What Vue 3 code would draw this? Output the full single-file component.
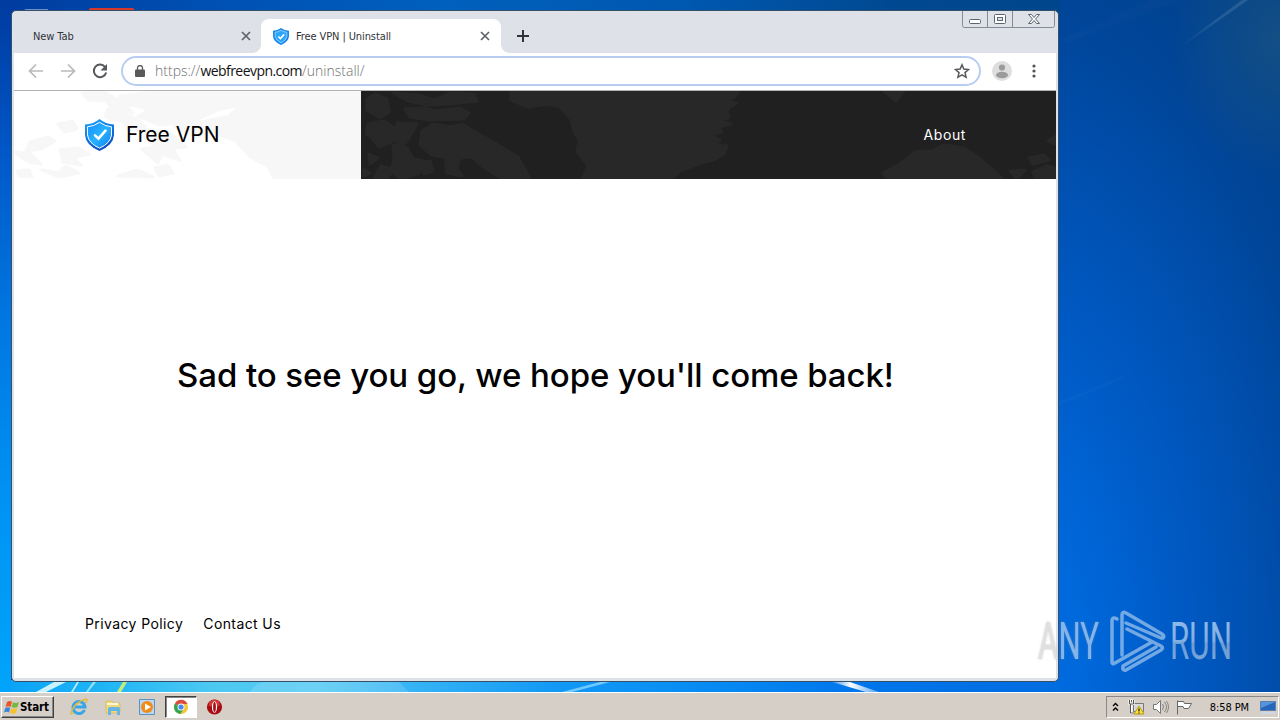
<script setup>
import { ref } from 'vue'

const tabs = ref([
  { id: 1, title: 'New Tab', active: false },
  { id: 2, title: 'Free VPN | Uninstall', active: true },
])

const footerLinks = ['Privacy Policy', 'Contact Us']
</script>

<template>
  <div class="desktop">
    <svg class="wallpaper" viewBox="0 0 1280 720">
      <defs>
        <linearGradient id="streak" x1="0" x2="1">
          <stop offset="0" stop-color="#fff" stop-opacity="0" />
          <stop offset="0.5" stop-color="#fff" stop-opacity="0.1" />
          <stop offset="1" stop-color="#fff" stop-opacity="0.12" />
        </linearGradient>
        <linearGradient id="flare" x1="0" x2="1">
          <stop offset="0" stop-color="#fff" stop-opacity="0.2" />
          <stop offset="0.4" stop-color="#fff" />
          <stop offset="1" stop-color="#fff" stop-opacity="0.3" />
        </linearGradient>
      </defs>
      <path d="M1180 46 1242 0 1248 0 1184 45z" fill="url(#streak)" />
      <path d="M1060 40 1150 0 1180 0 1070 42z" fill="#fff" opacity="0.015" />
      <path d="M1058 402 1125 375 1125 378 1058 406z" fill="#fff" opacity="0.02" />
      <path d="M24 10h24v-1H26z" fill="#b9c6dd" opacity="0.6" />
      <path d="M89 10v-1q0-1 2-1h41q2 0 2 1v1z" fill="#d8382c" />
      <path d="M36 692 54 682h12l-20 10z" fill="#c9f2ff" />
      <path d="M71 692 77 682h2l-6 10z" fill="#bdf0f5" />
      <path d="M86 692 93 682h3l-8 10z" fill="#9be3fb" />
      <path d="M117 692 123 682h4l-6 10z" fill="#c8ec7a" />
      <path d="M250 692q4-8 14-10h135l10 10z" fill="#fff" opacity="0.14" />
      <path d="M562 692 600 682h10l-38 10z" fill="#9be0ff" opacity="0.7" />
      <path d="M832 682h18l29 10h-13z" fill="url(#flare)" />
    </svg>

    <main class="window">
      <header class="tabstrip">
        <div v-for="tab in tabs" :key="tab.id" class="tab" :class="{ active: tab.active }">
          <svg v-if="tab.active" class="favicon" viewBox="0 0 30 32">
            <path d="M15 0Q21 5 30 5V16Q29 26 15 32Q1 26 0 16V5Q9 5 15 0z" fill="#1686e6" />
            <path d="M15 4Q21 8 26 8V16Q25 23 15 28Q5 23 4 16V8Q9 8 15 4z" fill="#2aa5fa" stroke="#a9dcff" stroke-width="1.500" />
            <path d="m10 16 4 4 7-8" fill="none" stroke="#fff" stroke-width="3" />
          </svg>
          <span class="tab-title">{{ tab.title }}</span>
          <svg class="tab-close" viewBox="0 0 10 10">
            <path d="m1 1 8 8M9 1 1 9" />
          </svg>
        </div>
        <svg class="new-tab" viewBox="0 0 12 12">
          <path d="M6 0v12M0 6h12" />
        </svg>
        <div class="controls">
          <svg viewBox="0 0 93 18">
            <path class="frame" d="M.5 0V14.500q0 2 2 2H90.500q2 0 2-2V0M25.500 0V16.500M50.500 0V16.500" />
            <rect x="7.500" y="8.500" width="11" height="4" rx="1" fill="#fff" />
            <rect x="32.500" y="3.500" width="11" height="9" rx="1" fill="#fff" />
            <rect x="35.500" y="6.500" width="5" height="3" fill="#dee1e8" />
            <path d="M66.500 3.500h3l2.500 3 2.500-3h3L73.500 8l4 4.500h-3L72 9.500l-2.500 3h-3L70.500 8z" fill="#fff" />
          </svg>
        </div>
      </header>

      <div class="toolbar">
        <svg class="nav muted" viewBox="0 0 16 16">
          <path d="M15 8H2M8 1.500 1.500 8 8 14.500" />
        </svg>
        <svg class="nav muted" viewBox="0 0 16 16">
          <path d="M1 8h13M8 1.500 14.500 8 8 14.500" />
        </svg>
        <svg class="nav" viewBox="0 0 16 16">
          <path d="M13.300 4.200A6.300 6.300 0 1 0 14.200 9.500" />
          <path class="solid" d="M15 1v6.500H8.500z" />
        </svg>
        <div class="omnibox">
          <svg class="lock" viewBox="0 0 10 12">
            <path d="M1 4.500h8q1 0 1 1V11q0 1-1 1H1q-1 0-1-1V5.500q0-1 1-1z" fill="#5a5a5a" />
            <path d="M2.500 5V3a2.500 2.500 0 0 1 5 0v2" fill="none" stroke="#5a5a5a" stroke-width="1.300" />
          </svg>
          <span class="url">https://<b>webfreevpn.com</b>/uninstall/</span>
          <svg class="star" viewBox="0 0 14 14">
            <path d="m7 1.500 1.600 3.800 4.200.4-3.200 2.700 1 4.100L7 10.300l-3.600 2.200 1-4.100L1.200 5.700l4.200-.4z" />
          </svg>
        </div>
        <svg class="avatar" viewBox="0 0 20 20">
          <circle cx="10" cy="10" r="10" fill="#dedede" />
          <circle cx="10" cy="6.500" r="3.100" fill="#9b9b9b" />
          <ellipse cx="10" cy="14" rx="6" ry="3.200" fill="#9b9b9b" />
        </svg>
        <svg class="menu" viewBox="0 0 4 14">
          <circle cx="2" cy="2" r="1.600" />
          <circle cx="2" cy="7" r="1.600" />
          <circle cx="2" cy="12" r="1.600" />
        </svg>
      </div>

      <section class="page">
        <div class="site-header">
          <svg class="map" viewBox="14 91 1042 88">
            <g class="light">
              <path d="M120 96 160 91H361V179H274L268 166 250 157 236 141 213 132 196 137 174 126 202 122 229 116 242 105 220 109 192 122 160 125 138 116 150 110 134 105 119 106z" />
              <path d="M82 93l22-1 14 8 15 13-20-4-7-8-17-1zM108 109l30 10 12 14-22-4-5-7-18-5zM150 130l22 5 14 12-14 1 8 12-18-6-4 9-16-14 14-2-12-10zM58 124l15-3 4 8-12 3zM30 142l18-5 7 4-14 8-15 2zM15 152l16 2 10 10-12-2-8-5zM60 150l18-2 11 6-16 4 8 7-18-3zM42 170l16 3 8-7 13 7-20 4zM17 171l12-1 3 7-13-1zM118 176l20-6 15 7zM155 168l12-3 6 8-14 3z" />
            </g>
            <path d="M361 91H1056V179H361z" fill="#202020" />
            <g class="dark">
              <path d="M511 91H739L734 97 727 102 737 103 727 109 729 117 719 121 731 124 718 127 722 132 708 135 720 140 714 144 727 146 724 154 713 160 698 164 680 171 672 179H582L588 166 582 158 577 152 579 140 574 132 571 119 560 107 547 104 528 107 511 100z" />
              <path d="M367 99l8-5 12 5 2 13-9 6-13-8zM393 93l26 2 15 5 17-7 23 1 3 7-25 3-26 1-18-4zM405 109l20-1 10 3 25-3 9 5-5 6-36 1-18-3zM368 124l16-3 9 6-2 15-12 5-8-10-5-3zM397 123l20 1-8 14-7 9-9-8zM422 131l11-7 18 3 11-3 20 12 20 11 16 10 12 22H502L482 166l-10-9-20 2-20-4-12-10z" />
              <path d="M393 145l14 3 6 11 11 2-5 12-18 6-10-8 3-11zM369 154l9 4-8 6zM381 166l13 4-8 9-12-1zM419 163l11-2 3 10-9 3zM445 157l14 2-2 10 5 7-15-3zM364 169l6 4-6 3z" />
              <path d="M884 91h20l-8 10z" />
              <path d="M883 173l17-9 15-12 17-1 12-6 20 3 15 10 14 12 10 9H887zM1010 171l15-1-8 9zM1029 158l15-3 5 5-16 4zM1033 172l14-6 9 2v11l-21-2zM1048 141l8-5v8z" />
            </g>
          </svg>
          <div class="brand">
            <svg viewBox="0 0 30 32">
              <defs>
                <linearGradient id="shield" x2="0.4" y2="1">
                  <stop offset="0" stop-color="#18a8ff" />
                  <stop offset="1" stop-color="#0b51c4" />
                </linearGradient>
                <linearGradient id="inner" x1="0" x2="1" y2="1">
                  <stop offset="0" stop-color="#148cff" />
                  <stop offset="0.5" stop-color="#27b3ff" />
                  <stop offset="1" stop-color="#147df0" />
                </linearGradient>
              </defs>
              <path d="M15 0Q21 5 29.500 5.500V16Q29 26 15 32Q1 26 .5 16V5.500Q9 5 15 0z" fill="url(#shield)" />
              <path d="M15 3.300Q20.500 7.300 27 7.800V16Q26 24.300 15 29.200Q4 24.300 3 16V7.800Q9.500 7.300 15 3.300z" fill="url(#inner)" stroke="#fff" />
              <path d="m10.500 16.300 3.500 3.300 7-8" fill="none" stroke="#fff" stroke-width="2.500" stroke-linecap="round" />
            </svg>
            <span>Free VPN</span>
          </div>
          <span class="about">About</span>
        </div>
        <h1><span>Sad to see you go, we hope you'll come back!</span></h1>
        <footer>
          <span v-for="link in footerLinks" :key="link">{{ link }}</span>
        </footer>
      </section>
    </main>

    <div class="taskbar">
      <div class="start">
        <svg viewBox="0 0 16 16">
          <path d="M3 3Q6 1 8 3L6.500 8Q4 6.500 1.500 8z" fill="#e8562a" />
          <path d="M9 3.300Q12 5 15 3L13.500 8Q10.500 9.500 7.500 8z" fill="#74b943" />
          <path d="M1.200 9Q4 7.500 6.200 9L5 13.500Q2.500 12 0 13.500z" fill="#3b86dc" />
          <path d="M7.200 9.200Q10 10.500 13.200 9L12 14Q9 15.500 5.800 14z" fill="#f5c229" />
        </svg>
        <span>Start</span>
      </div>
      <div class="launch">
        <svg viewBox="0 0 18 18">
          <path d="M14.500 12A6 6 0 1 1 15 9H5" fill="none" stroke="#3aa5e5" stroke-width="3" />
          <path d="M3 15Q0 18 1.500 13Q5 4 16 1Q18.500 1 15.500 5" fill="none" stroke="#e5b935" stroke-width="1.300" />
        </svg>
      </div>
      <div class="launch">
        <svg viewBox="0 0 18 18">
          <path d="M2 3h6l1 2h7v10H2z" fill="#f1d67b" stroke="#d5b252" stroke-width=".6" />
          <path d="M3 5h11v2H3z" fill="#fff8d5" />
          <path d="M4 17v-6q0-2 2-2h8q2 0 2 2v6h-3v-4H7v4z" fill="#65b6e3" />
        </svg>
      </div>
      <div class="launch">
        <svg viewBox="0 0 18 18">
          <path d="M1.500 1.500h15v15h-15z" fill="#b9d8f3" stroke="#5b91c7" />
          <circle cx="9" cy="9" r="6" fill="#f28a18" />
          <path d="m7 5.500 6 3.500-6 3.500z" fill="#fff" />
        </svg>
      </div>
      <div class="launch open">
        <svg viewBox="0 0 18 18">
          <circle cx="9" cy="9" r="7" fill="#f4c536" />
          <path d="M9 9 3 5.400A7 7 0 0 1 15.500 6H9z" fill="#dc4b3e" />
          <path d="M3 5.400A7 7 0 0 0 8.300 16L12 10.500 9 9z" fill="#35a455" />
          <circle cx="9" cy="9" r="3.500" fill="#fff" />
          <circle cx="9" cy="9" r="2.600" fill="#4688ee" />
        </svg>
      </div>
      <div class="launch">
        <svg viewBox="0 0 18 18">
          <circle cx="8.500" cy="9" r="7.600" fill="#a90d14" />
          <path d="M3.500 4q5-5 10 0v4h-11z" fill="#d23a38" />
          <ellipse cx="8.500" cy="9" rx="2.600" ry="5.800" fill="#fff" />
          <ellipse cx="8.500" cy="9" rx="1.400" ry="5" fill="#a61218" />
        </svg>
      </div>
      <div class="tray">
        <svg class="chevrons" viewBox="0 0 7 10">
          <path d="m1 4 2.500-2.500L6 4M1 8.500 3.500 6 6 8.500" />
        </svg>
        <svg viewBox="0 0 17 16">
          <path d="M5.500 4.500h10v8h-10z" fill="#d8d8d8" stroke="#777" />
          <path d="M1.500 1v4h4V1M3.500 0v3M3.500 5v9h4" fill="none" stroke="#fff" stroke-width="2" />
          <path d="M1.500 1v4h4V1M3.500 1v2M2.500 5v9h4" fill="none" stroke="#555" />
          <path d="m11 7 5 8H6z" fill="#ffe23c" stroke="#b79916" />
          <path d="M11 9.500v3M11 13.500v1" stroke="#222" stroke-width="1.300" />
        </svg>
        <svg viewBox="0 0 17 16">
          <path d="M1.500 5.500h3l4-4v13l-4-4h-3z" fill="#fff" stroke="#777" />
          <path d="M10.500 5q2 3 0 6M12.500 3q4 5 0 10M14.500 2q4 6 0 12" fill="none" stroke="#858585" />
        </svg>
        <svg viewBox="0 0 17 16">
          <path d="M1.500 1.500v14M1.500 2.500h6l1 2h7l-3 5H8l-1-2H1.500" fill="#fff" stroke="#666" />
        </svg>
        <time>8:58 PM</time>
        <svg class="monitor" viewBox="0 0 16 14">
          <path d="M.5 1.500h15v9H.5z" fill="#2865bd" stroke="#597faf" />
          <path d="M1 2h14L1 8z" fill="#5794dc" />
          <path d="M1 12h14v2H1z" fill="#cbd8e8" />
        </svg>
      </div>
    </div>

    <svg class="watermark" viewBox="0 0 240 80">
      <defs>
        <linearGradient id="mark" gradientUnits="userSpaceOnUse" x1="0" y1="18" x2="0" y2="54">
          <stop offset="0" stop-color="#b4d3f3" stop-opacity="0.78" />
          <stop offset="0.52" stop-color="#b4d0ec" stop-opacity="0.72" />
          <stop offset="0.56" stop-color="#b4cce4" stop-opacity="0.6" />
          <stop offset="1" stop-color="#b6cee6" stop-opacity="0.65" />
        </linearGradient>
        <!-- grey over the white page, pale blue over the wallpaper -->
        <linearGradient id="edge" gradientUnits="userSpaceOnUse" x1="22" x2="24">
          <stop offset="0" stop-color="#e0e0e0" />
          <stop offset="1" stop-color="#84b5ea" />
        </linearGradient>
      </defs>
      <text class="shade" fill="url(#edge)" x="3" y="54" textLength="61" lengthAdjust="spacingAndGlyphs">ANY</text>
      <text fill="url(#mark)" x="135" y="54" textLength="62" lengthAdjust="spacingAndGlyphs">RUN</text>
      <g class="triangle">
        <path d="M82 14q-5-3-5 2v41q0 3 3 1l37-21" />
        <path d="M87 50V10q0-4 4-2l36 21q3 2 1 4l-2 0L91 18" />
        <path d="M92 24l34 17q3 2 0 4L91 65q-4 1-3-4l33-19" />
      </g>
    </svg>
  </div>
</template>

<style>
body {
  overflow: hidden;
}
</style>

<style scoped>
.desktop {
  position: relative;
  display: flex;
  flex-direction: column;
  justify-content: space-between;
  box-sizing: border-box;
  width: 1280px;
  height: 720px;
  padding-top: 10px;
  font-family: 'DejaVu Sans Condensed', 'DejaVu Sans', sans-serif;
  background:
    linear-gradient(#003b9f, #0050be 17%, #005ccc 25%, #0079e2 48%, #0092f3 72%, #00a4fb) 0 0 / 11px 692px no-repeat,
    linear-gradient(90deg, #003b9f, #0050b3 20%, #0060bd 42%, #0058af 65%, #004890 85%, #00468c) 0 0 / 1060px 12px no-repeat,
    linear-gradient(90deg, #08a1f7, #20b6f5 10%, #4cc9f1 20%, #55caf3 30%, #38b5f5 38%, #1198f5 53%, #078bf3 67%, #0077ec 80%, #006ce0) 0 680px / 1060px 12px no-repeat,
    radial-gradient(ellipse 110px 140px at 1280px 40px, rgba(30, 85, 130, 0.65), transparent),
    radial-gradient(ellipse 430px 820px at 1000px 650px, #006ee4 0%, #0069dc 18%, #005cc8 38%, #0050b0 60%, #004598 80%, #004189 100%);
}
.wallpaper {
  position: absolute;
  inset: 0;
}
.window {
  position: relative;
  display: flex;
  flex-direction: column;
  box-sizing: border-box;
  width: 1048px;
  height: 672px;
  margin-left: 11px;
  padding: 1px 2px 3px;
  border: 1px solid #35506b;
  border-radius: 5px;
  background: #dee1e6;
}
.tabstrip {
  position: relative;
  display: flex;
  align-items: flex-end;
  height: 41px;
  background: #dee1e8;
}
.tab {
  display: flex;
  align-items: center;
  box-sizing: border-box;
  width: 247px;
  height: 34px;
  padding: 0 10px 0 19px;
  color: #303438;
  font-size: 11px;
}
.tab.active {
  position: relative;
  width: 240px;
  padding: 0 11px 0 12px;
  border-radius: 8px 8px 0 0;
  background: #fff;
}
.tab.active::before,
.tab.active::after {
  content: '';
  position: absolute;
  bottom: 0;
  width: 8px;
  height: 8px;
}
.tab.active::before {
  left: -8px;
  background: radial-gradient(circle at 0 0, transparent 7.5px, #fff 8px);
}
.tab.active::after {
  right: -8px;
  background: radial-gradient(circle at 100% 0, transparent 7.5px, #fff 8px);
}
.favicon {
  width: 16px;
  height: 17px;
  margin-right: 7px;
}
.tab-title {
  letter-spacing: -0.1px;
}
.tab-close {
  width: 10px;
  height: 10px;
  margin-left: auto;
  stroke: #5f6368;
  stroke-width: 1.7;
}
.new-tab {
  width: 12px;
  height: 12px;
  margin: 0 0 11px 16px;
  stroke: #303338;
  stroke-width: 2;
}
.controls {
  align-self: flex-start;
  height: 18px;
  margin: -1px 1px 0 auto;
}
.controls svg {
  display: block;
  width: 93px;
  height: 18px;
  fill: none;
  stroke: #5c6373;
}
.controls .frame {
  stroke: #858b98;
}
.toolbar {
  display: flex;
  align-items: center;
  box-sizing: border-box;
  height: 38px;
  padding: 0 20px 1px 14px;
  border-bottom: 1px solid #b8b2ae;
  background: #fff;
}
.nav {
  width: 16px;
  height: 16px;
  margin-right: 16px;
  fill: none;
  stroke: #55585c;
  stroke-width: 2;
}
.nav.muted {
  stroke: #b9babc;
  stroke-width: 1.7;
}
.nav .solid {
  fill: #55585c;
  stroke: none;
}
.omnibox {
  display: flex;
  flex: none;
  align-items: center;
  box-sizing: border-box;
  width: 860px;
  height: 30px;
  margin-left: -3px;
  padding: 0 9px 0 12px;
  border: 2px solid #b9cdf3;
  border-radius: 15px;
  background: #fff;
}
.lock {
  width: 10px;
  height: 12px;
}
.url {
  margin-left: 10px;
  padding-bottom: 2px;
  color: #707070;
  font: 300 14px 'Open Sans', sans-serif;
}
.url b {
  color: #111;
  font-weight: 400;
  letter-spacing: -0.55px;
}
.star {
  width: 16px;
  height: 16px;
  margin-left: auto;
  fill: none;
  stroke: #55585c;
  stroke-width: 1.3;
}
.avatar {
  width: 20px;
  height: 20px;
  margin-left: 11px;
}
.menu {
  width: 4px;
  height: 14px;
  margin-left: auto;
  fill: #505357;
}
.page {
  display: flex;
  flex: 1;
  flex-direction: column;
  background: #fff;
  color: #000;
  font-family: Inter, sans-serif;
}
.site-header {
  position: relative;
  display: flex;
  align-items: center;
  justify-content: space-between;
  box-sizing: border-box;
  height: 88px;
  padding: 0 90px 0 71px;
}
.map {
  position: absolute;
  inset: 0;
}
.map g {
  stroke-width: 3;
  stroke-linejoin: round;
}
.map .light {
  fill: #f7f7f7;
  stroke: #f7f7f7;
}
.map .dark {
  fill: #282828;
  stroke: #282828;
}
.brand {
  position: relative;
  display: flex;
  align-items: center;
}
.brand svg {
  width: 31px;
  height: 32px;
  margin: 0 10px 0 -1px;
}
.brand span {
  padding: 0 0 1px 1px;
  font-size: 21px;
}
.about {
  position: relative;
  padding-bottom: 2px;
  color: #fff;
  font-size: 14px;
  letter-spacing: 0.6px;
}
h1 {
  display: flex;
  flex: 1;
  align-items: center;
  margin: 0;
  padding: 0 0 44px 163px;
  font-size: 33px;
  font-weight: 500;
  letter-spacing: -0.09px;
  white-space: nowrap;
}
footer {
  display: flex;
  gap: 20px;
  height: 63px;
  padding-left: 71px;
  font-size: 14px;
  letter-spacing: 0.4px;
}
.taskbar {
  position: relative;
  display: flex;
  align-items: center;
  box-sizing: border-box;
  height: 28px;
  padding: 1px 0 0 1px;
  border-top: 1px solid #fff;
  background: #d6cfc8;
}
.start {
  display: flex;
  align-items: center;
  box-sizing: border-box;
  width: 53px;
  height: 22px;
  margin-right: 9px;
  padding-left: 2px;
  border: 1px solid #fff;
  border-right-color: #404040;
  border-bottom-color: #404040;
  box-shadow: inset -1px -1px #888;
  color: #000;
  font-size: 11.5px;
  font-weight: bold;
}
.start svg {
  width: 16px;
  height: 16px;
}
.start span {
  letter-spacing: -0.1px;
}
.launch {
  display: grid;
  place-items: center;
  box-sizing: border-box;
  width: 32px;
  height: 22px;
  margin-right: 2px;
}
.launch svg {
  width: 18px;
  height: 18px;
}
.launch.open {
  border: 1px solid #404040;
  border-right-color: #fff;
  border-bottom-color: #fff;
  background: #fff;
  box-shadow: inset 1px 1px #888;
}
.tray {
  display: flex;
  align-items: center;
  box-sizing: border-box;
  width: 173px;
  height: 22px;
  margin: 0 1px 0 auto;
  padding: 0 2px 0 5px;
  border: 1px solid #888;
  border-right-color: #fff;
  border-bottom-color: #fff;
}
.tray svg {
  width: 17px;
  height: 16px;
  margin-right: 7px;
}
.tray .chevrons {
  width: 7px;
  height: 10px;
  margin: 0 9px 0 0;
  fill: none;
  stroke: #000;
  stroke-width: 1.4;
}
.tray time {
  margin-left: auto;
  color: #000;
  font-size: 11px;
  letter-spacing: -0.1px;
  white-space: nowrap;
}
.tray .monitor {
  width: 16px;
  height: 14px;
  margin: 0 0 0 11px;
}
/* overlay mark sits across the window edge */
.watermark {
  position: absolute;
  left: 1035px;
  top: 605px;
  width: 240px;
  height: 80px;
  font-family: 'Roboto', sans-serif;
  font-size: 51px;
}
.watermark .shade {
  filter: drop-shadow(0 0 1px rgba(150, 150, 150, 0.5));
}
.triangle {
  fill: none;
  stroke: #8fbceb;
  stroke-width: 3.5;
  stroke-linejoin: round;
  stroke-linecap: round;
  opacity: 0.8;
}
</style>
